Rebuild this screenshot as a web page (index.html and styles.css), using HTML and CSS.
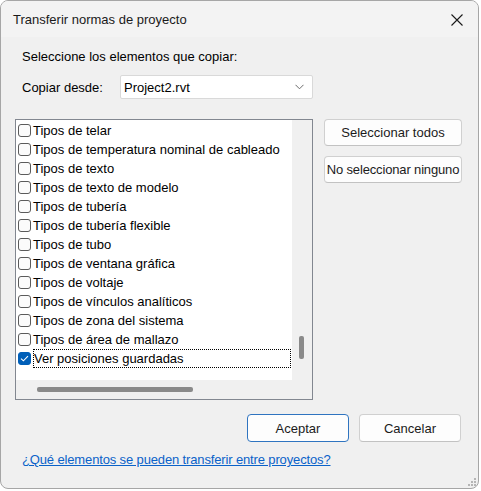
FILE: index.html
```html
<!DOCTYPE html>
<html lang="es">
<head>
<meta charset="utf-8">
<title>Transferir normas de proyecto</title>
<link rel="stylesheet" href="styles.css">
</head>
<body>
<div class="window">
  <div class="titlebar">
    <span class="title">Transferir normas de proyecto</span>
    <svg class="close" width="12" height="12" viewBox="0 0 12 12"><path d="M0.5 0.5L11.5 11.5M11.5 0.5L0.5 11.5" stroke="#1a1a1a" stroke-width="1.1" fill="none"/></svg>
  </div>
  <div class="content">
    <div class="prompt">Seleccione los elementos que copiar:</div>
    <div class="source-row">
      <span class="label">Copiar desde:</span>
      <div class="combo">
        <span>Project2.rvt</span>
        <svg width="9" height="6" viewBox="0 0 9 6"><path d="M0.5 0.8L4.5 4.8L8.5 0.8" stroke="#6b6b6b" stroke-width="1" fill="none"/></svg>
      </div>
    </div>
    <div class="main-row">
      <div class="listbox">
        <div class="list-area">
          <ul class="items">
            <li><span class="cb"></span><span class="txt">Tipos de telar</span></li>
            <li><span class="cb"></span><span class="txt">Tipos de temperatura nominal de cableado</span></li>
            <li><span class="cb"></span><span class="txt">Tipos de texto</span></li>
            <li><span class="cb"></span><span class="txt">Tipos de texto de modelo</span></li>
            <li><span class="cb"></span><span class="txt">Tipos de tubería</span></li>
            <li><span class="cb"></span><span class="txt">Tipos de tubería flexible</span></li>
            <li><span class="cb"></span><span class="txt">Tipos de tubo</span></li>
            <li><span class="cb"></span><span class="txt">Tipos de ventana gráfica</span></li>
            <li><span class="cb"></span><span class="txt">Tipos de voltaje</span></li>
            <li><span class="cb"></span><span class="txt">Tipos de vínculos analíticos</span></li>
            <li><span class="cb"></span><span class="txt">Tipos de zona del sistema</span></li>
            <li><span class="cb"></span><span class="txt">Tipos de área de mallazo</span></li>
            <li class="focused"><span class="cb checked"><svg width="9" height="7" viewBox="0 0 9 7"><path d="M1 3.6L3.4 5.8L8 1.2" stroke="#fff" stroke-width="1.1" fill="none"/></svg></span><span class="txt">Ver posiciones guardadas</span></li>
          </ul>
          <div class="vscroll"><div class="vthumb"></div></div>
        </div>
        <div class="hscroll"><div class="hthumb"></div></div>
      </div>
      <div class="side-buttons">
        <button class="btn side">Seleccionar todos</button>
        <button class="btn side tight">No seleccionar ninguno</button>
      </div>
    </div>
    <div class="dialog-buttons">
      <button class="btn dlg default">Aceptar</button>
      <button class="btn dlg">Cancelar</button>
    </div>
    <a class="help" href="#">¿Qué elementos se pueden transferir entre proyectos?</a>
  </div>
  <div class="grip">
    <i style="right:2px;bottom:2px"></i><i style="right:5px;bottom:2px"></i><i style="right:8px;bottom:2px"></i>
    <i style="right:2px;bottom:5px"></i><i style="right:5px;bottom:5px"></i><i style="right:2px;bottom:8px"></i>
  </div>
</div>
</body>
</html>
```

FILE: styles.css
```css
* { box-sizing: border-box; }
html, body { margin: 0; padding: 0; background: #ffffff; }
body {
  font-family: "Liberation Sans", Arial, sans-serif;
  font-size: 13px;
  color: #000;
}
.window {
  position: relative;
  width: 479px;
  height: 489px;
  border: 1px solid #a6a6a6;
  border-radius: 8px;
  background: #f0f0f0;
  overflow: hidden;
  display: flex;
  flex-direction: column;
}
.titlebar {
  height: 36px;
  flex: none;
  display: flex;
  align-items: center;
  justify-content: space-between;
  padding: 0 15px 0 12px;
  background: #f3f3f3;
}
.title { font-size: 13px; color: #1a1a1a; }
.close { display: block; margin-top: 1px; }
.content {
  padding: 12px 0 0 14px;
  display: flex;
  flex-direction: column;
}
.prompt { height: 16px; line-height: 16px; padding-left: 7px; }
.source-row {
  margin-top: 10px;
  display: flex;
  align-items: center;
  height: 24px;
}
.label { width: 105px; padding-left: 7px; }
.combo {
  width: 193px;
  height: 24px;
  background: #fff;
  border: 1px solid #d9d9d9;
  border-radius: 2px;
  display: flex;
  align-items: center;
  justify-content: space-between;
  padding: 0 8px 0 3px;
}
.combo svg { display: block; }
.main-row {
  margin-top: 20px;
  display: flex;
  gap: 11px;
  align-items: flex-start;
}
.listbox {
  width: 298px;
  height: 281px;
  border: 1px solid #828790;
  display: flex;
  flex-direction: column;
  background: #f0f0f0;
}
.list-area { display: flex; height: 260px; }
.items {
  list-style: none;
  margin: 0;
  padding: 1px 0 0 0;
  width: 276px;
  background: #fff;
}
.items li {
  height: 19px;
  display: flex;
  align-items: center;
  padding-left: 2px;
}
.cb {
  width: 13px;
  height: 13px;
  border: 1px solid #5b5b5b;
  border-radius: 3px;
  background: #fbfbfb;
  flex: none;
  margin-right: 2px;
  display: flex;
  align-items: center;
  justify-content: center;
}
.cb.checked { background: #005fb8; border-color: #005fb8; }
.cb svg { display: block; }
.txt { line-height: 17px; white-space: nowrap; }
.focused .txt {
  flex: 1;
  height: 19px;
  line-height: 17px;
  border: 1px dotted #000;
  margin-right: 1px;
}
.vscroll {
  width: 20px;
  position: relative;
  background: #f0f0f0;
}
.vthumb {
  position: absolute;
  left: 7px;
  top: 216px;
  width: 5px;
  height: 23px;
  background: #8a8a8a;
  border-radius: 2px;
}
.hscroll {
  height: 19px;
  position: relative;
}
.hthumb {
  position: absolute;
  left: 21px;
  top: 7px;
  width: 156px;
  height: 5px;
  background: #8a8a8a;
  border-radius: 2px;
}
.side-buttons {
  display: flex;
  flex-direction: column;
  gap: 10px;
}
.btn {
  font-family: "Liberation Sans", Arial, sans-serif;
  font-size: 13px;
  color: #1b1b1b;
  background: #fdfdfd;
  border: 1px solid #d0d0d0;
  border-bottom-color: #c2c2c2;
  border-radius: 4px;
  padding: 0;
  white-space: nowrap;
}
.btn.side { width: 138px; height: 27px; }
.btn.tight { letter-spacing: -0.15px; }
.dialog-buttons {
  margin-top: 14px;
  display: flex;
  justify-content: flex-end;
  gap: 10px;
  padding-right: 17px;
}
.btn.dlg { width: 102px; height: 28px; }
.btn.default { border: 1px solid #2f74c0; background: #fdfdfd; }
.help {
  margin-top: 10px;
  padding-left: 7px;
  line-height: 16px;
  color: #0a62c9;
  text-decoration: underline;
  letter-spacing: -0.14px;
  align-self: flex-start;
}
.grip {
  position: absolute;
  right: 0;
  bottom: 0;
  width: 12px;
  height: 12px;
}
.grip i {
  position: absolute;
  width: 2px;
  height: 2px;
  background: #b5b5b5;
}
```
